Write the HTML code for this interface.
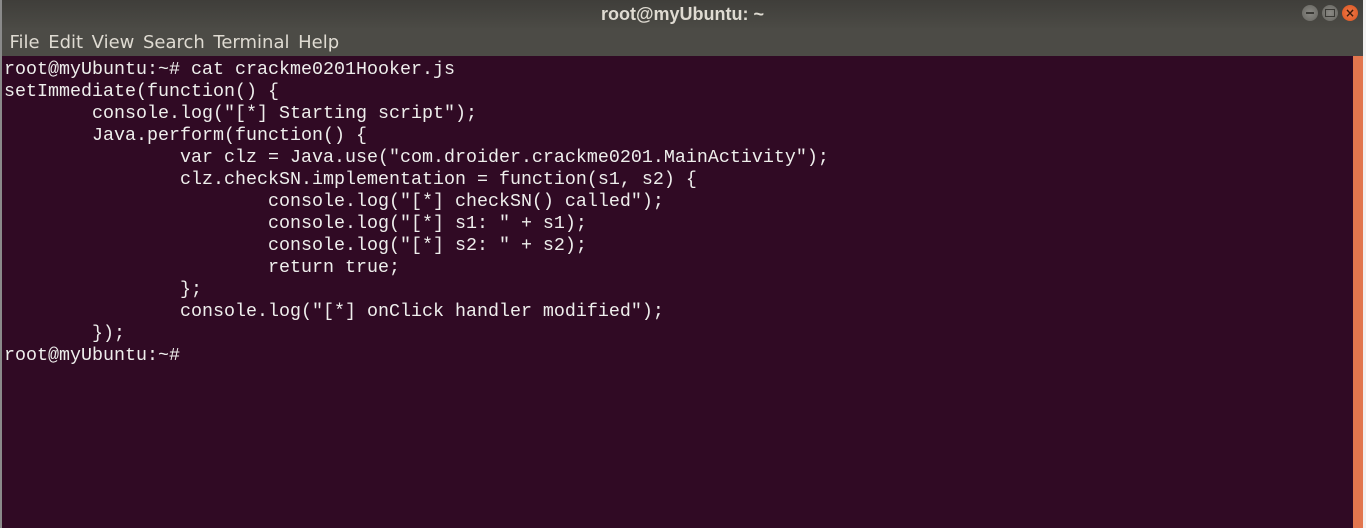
<!DOCTYPE html>
<html><head><style>
html,body{margin:0;padding:0;width:1366px;height:528px;overflow:hidden;background:#f2f2f2;}
.win{position:absolute;left:0;top:0;width:1363px;height:528px;background:#300a24;border-left:2px solid #8a8a8a;box-sizing:border-box;}
.title{position:absolute;left:0;top:0;width:100%;height:28px;background:linear-gradient(#3f3e3a,#4b4a45);color:#dfdbd2;font:bold 18px "Liberation Sans",sans-serif;text-align:center;line-height:28px;}
.menu{position:absolute;left:0;top:28px;width:100%;height:28px;background:#4c4b46;color:#dfdbd2;font:18px "DejaVu Sans","Liberation Sans",sans-serif;line-height:30px;}
.menu span{margin-left:8.6px;}
.menu span:first-child{margin-left:7.5px;}
.term{position:absolute;left:2px;top:59px;font:18.33px/22px "Liberation Mono",monospace;color:#eeeeec;white-space:pre;margin:0;}
.sb{position:absolute;right:0;top:56px;width:10px;height:472px;background:#e2764e;}
.btn{position:absolute;top:5px;width:16px;height:16px;border-radius:50%;}
</style></head><body>
<div class="win">
<div class="title">root@myUbuntu: ~</div>
<div class="btn" style="left:1300px;background:radial-gradient(#8a8984,#65645f);"><div style="position:absolute;left:4px;top:7px;width:8px;height:2px;background:#3a3935"></div></div>
<div class="btn" style="left:1320px;background:radial-gradient(#8a8984,#65645f);"><div style="position:absolute;left:3px;top:4px;width:8px;height:6px;border:1px solid #3a3935"></div></div>
<div class="btn" style="left:1340px;background:radial-gradient(#f07a4a,#d9531e);color:#3a1a0a;font:bold 12px/16px 'DejaVu Sans',sans-serif;text-align:center;">×</div>
<div class="menu"><span>File</span><span>Edit</span><span>View</span><span>Search</span><span>Terminal</span><span>Help</span></div>
<pre class="term">root@myUbuntu:~# cat crackme0201Hooker.js
setImmediate(function() {
        console.log("[*] Starting script");
        Java.perform(function() {
                var clz = Java.use("com.droider.crackme0201.MainActivity");
                clz.checkSN.implementation = function(s1, s2) {
                        console.log("[*] checkSN() called");
                        console.log("[*] s1: " + s1);
                        console.log("[*] s2: " + s2);
                        return true;
                };
                console.log("[*] onClick handler modified");
        });
root@myUbuntu:~# </pre>
<div class="sb"></div>
</div>
</body></html>
